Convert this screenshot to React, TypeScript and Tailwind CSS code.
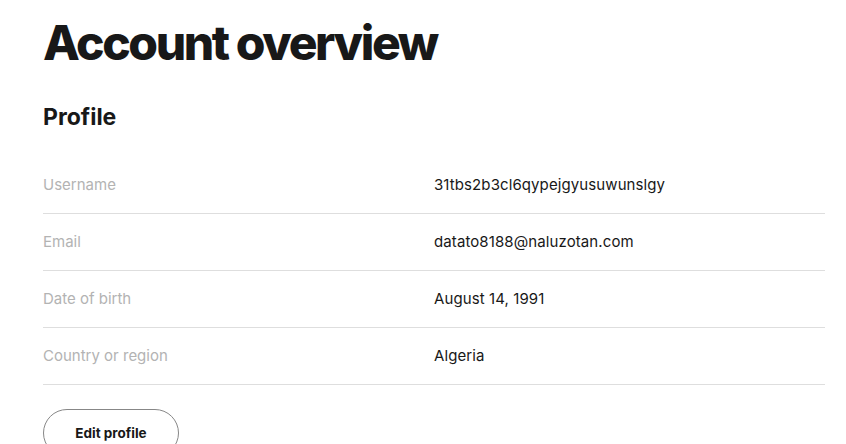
import React from "react";

const rows: [string, string][] = [
  ["Username", "31tbs2b3cl6qypejgyusuwunslgy"],
  ["Email", "datato8188@naluzotan.com"],
  ["Date of birth", "August 14, 1991"],
  ["Country or region", "Algeria"],
];

export default function App() {
  return (
    <div
      className="min-h-screen bg-white pl-[43px] pr-[21px] text-[#181818]"
      style={{ fontFamily: "Inter, 'Noto Sans', sans-serif" }}
    >
      <h1 className="pt-[15px] text-[48px] font-extrabold leading-[56px] tracking-[-2.4px]">
        Account overview
      </h1>
      <h2 className="mt-[31px] text-[23px] font-bold leading-[30px]">Profile</h2>
      <div className="mt-[25px]">
        {rows.map(([label, value]) => (
          <div
            key={label}
            className="grid h-[57px] grid-cols-2 items-center border-b border-[#dedede] text-[15px]"
          >
            <span className="text-[#b3b3b3]">{label}</span>
            <span className="text-[#181818] tracking-[0.1px]">{value}</span>
          </div>
        ))}
      </div>
      <button className="mt-[24px] h-[48px] w-[136px] rounded-full border border-[#878787] text-[13.5px] font-bold text-[#181818]">
        Edit profile
      </button>
    </div>
  );
}
